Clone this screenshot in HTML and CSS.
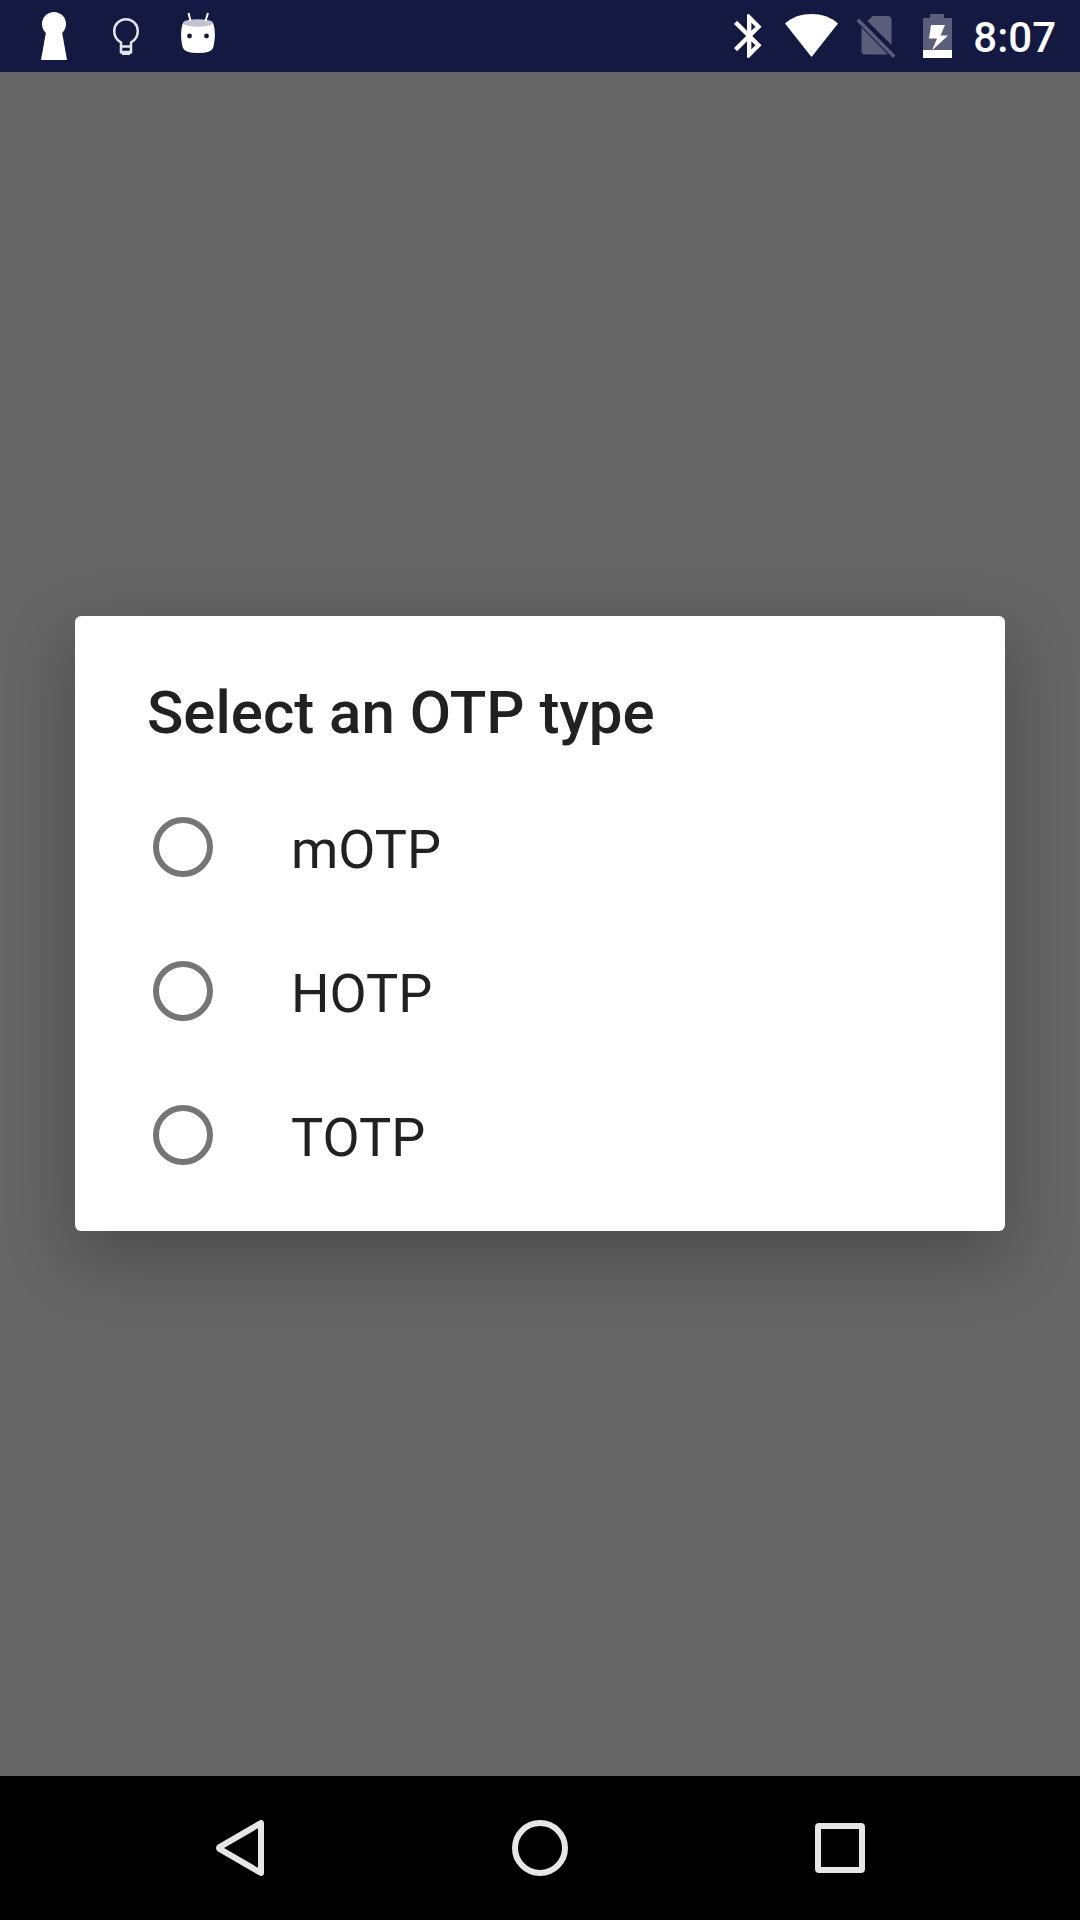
FILE: index.html
```html
<!DOCTYPE html>
<html lang="en">
<head>
<meta charset="utf-8">
<meta name="viewport" content="width=device-width, initial-scale=1">
<title>Select an OTP type</title>
<link rel="stylesheet" href="styles.css">
</head>
<body>
<div class="screen">
  <header class="status-bar">
    <div class="notifications">
      <svg class="notification" viewBox="0 0 72 72" aria-hidden="true">
        <circle cx="36" cy="24" r="12" fill="#fff"/>
        <path d="M28 32h16l5 28H23z" fill="#fff"/>
      </svg>
      <svg class="notification" viewBox="0 0 72 72" aria-hidden="true">
        <path d="M31 52V42.500C26.500 40 24.200 36 24.200 31a11.800 11.800 0 0 1 23.600 0c0 5-2.300 9-6.800 11.500V52zM31 46.500h10" fill="none" stroke="#e4e5ea" stroke-width="2.500"/>
        <path d="M30 51h12v2.500h-2V55h-8v-1.500h-2z" fill="#e4e5ea"/>
      </svg>
      <svg class="notification" viewBox="0 0 72 72" aria-hidden="true">
        <path d="M21 23Q36 20 51 23C54 30 53 42 51 48Q49.500 53 36 53Q22.500 53 21 48C19 42 18 30 21 23z" fill="#fff"/>
        <ellipse cx="36" cy="23" rx="15" ry="3.800" fill="#c3c4cf"/>
        <path d="M26.500 13l2 8M46 13l-2.500 8" stroke="#fff" stroke-width="2"/>
        <circle cx="27.500" cy="36" r="2.400" fill="#141941"/>
        <circle cx="44.500" cy="36" r="2.400" fill="#141941"/>
      </svg>
    </div>
    <div class="system">
      <svg class="bluetooth" viewBox="-1 0 24 24" aria-hidden="true">
        <path fill="#fff" d="M17.710 7.710L12 2h-1v7.590L6.410 5 5 6.410 10.590 12 5 17.590 6.410 19 11 14.410V22h1l5.710-5.710-4.300-4.290 4.300-4.290zM13 5.830l1.880 1.880L13 9.590V5.830zm1.880 10.460L13 18.170v-3.760l1.880 1.880z"/>
      </svg>
      <svg class="wifi" viewBox="0 0 60 72" aria-hidden="true">
        <path fill="#fff" d="M30.500 57L4 23.500C11 17 21 14 30.500 14S50 17 57 23.500z"/>
      </svg>
      <svg class="sim" viewBox="0 0 56 72" aria-hidden="true">
        <g fill="#fff" fill-opacity=".3">
          <path d="M7.500 21L10 18.500 46.500 55.500 44 58z"/>
          <path d="M12.500 27.500L39 54.500H16a3.500 3.500 0 0 1-3.500-3.500z"/>
          <path d="M18.500 21L23.500 16H39a3.500 3.500 0 0 1 3.500 3.500V45z"/>
        </g>
      </svg>
      <svg class="battery" viewBox="0 0 48 72" aria-hidden="true">
        <path fill="#fff" fill-opacity=".3" d="M10 18h7v-4h14v4h8v32H10z"/>
        <path fill="#fff" d="M10 50h29v8H10z"/>
        <path fill="#fff" d="M18 25h14l-4.500 10.500H35L19 50.500 24 38.500h-8z"/>
      </svg>
      <time class="clock" datetime="08:07">8:07</time>
    </div>
  </header>

  <main class="stage">
    <form class="dialog" role="dialog" aria-labelledby="dialog-title">
      <h1 class="dialog-title" id="dialog-title">Select an OTP type</h1>
      <div class="options" role="radiogroup" aria-labelledby="dialog-title">
        <label class="option"><input class="radio" type="radio" name="otp" value="motp"><span class="option-text">mOTP</span></label>
        <label class="option"><input class="radio" type="radio" name="otp" value="hotp"><span class="option-text">HOTP</span></label>
        <label class="option"><input class="radio" type="radio" name="otp" value="totp"><span class="option-text">TOTP</span></label>
      </div>
    </form>
  </main>

  <nav class="nav-bar" aria-label="System">
    <button class="nav-button" type="button" aria-label="Back">
      <svg class="nav-icon" viewBox="0 0 72 72" aria-hidden="true"><path d="M57 11v50L15.500 36.800Q14.500 36 15.500 35.200z"/></svg>
    </button>
    <button class="nav-button" type="button" aria-label="Home">
      <svg class="nav-icon" viewBox="0 0 72 72" aria-hidden="true"><circle cx="36" cy="36" r="25"/></svg>
    </button>
    <button class="nav-button" type="button" aria-label="Overview">
      <svg class="nav-icon" viewBox="0 0 72 72" aria-hidden="true"><rect x="14" y="14" width="44" height="44" rx="1"/></svg>
    </button>
  </nav>
</div>
</body>
</html>
```
FILE: styles.css
```css
* {
  box-sizing: border-box;
}

body {
  margin: 0;
  background: #656565;
  color: #212121;
  font-family: Roboto, "Noto Sans", sans-serif;
}

svg {
  display: block;
  flex: none;
}

.screen {
  display: flex;
  flex-direction: column;
  min-height: 100vh;
}

.status-bar {
  display: flex;
  justify-content: space-between;
  height: 72px;
  padding: 0 24px 0 18px;
  background: #141941;
  color: #fff;
}

.notifications,
.system {
  display: flex;
  align-items: center;
}

.notification {
  width: 72px;
  height: 72px;
}

.system {
  gap: 8px;
}

.bluetooth {
  width: 52px;
  height: 52px;
}

.wifi {
  width: 60px;
  height: 72px;
}

.sim {
  width: 56px;
  height: 72px;
}

.battery {
  width: 48px;
  height: 72px;
}

.clock {
  padding: 4px 0 0 4px;
  font-size: 42px;
  font-weight: 500;
  line-height: 48px;
}

.stage {
  display: flex;
  flex: 1;
  align-items: center;
  padding: 48px 75px 49px;
}

.dialog {
  flex: 1;
  padding-bottom: 24px;
  border-radius: 6px;
  background: #fff;
  box-shadow: 0 24px 68px rgba(0, 0, 0, 0.27);
}

.dialog-title {
  margin: 0;
  padding: 57px 72px 22px;
  font-size: 60px;
  font-weight: 500;
  line-height: 80px;
}

.option {
  display: flex;
  align-items: center;
  gap: 78px;
  height: 144px;
  padding: 0 78px;
  font-size: 54px;
  line-height: 64px;
}

.option-text {
  padding-top: 5px;
}

.radio {
  flex: none;
  width: 60px;
  height: 60px;
  margin: 0;
  border: 6px solid #757575;
  border-radius: 50%;
  appearance: none;
}

.radio:checked {
  background: radial-gradient(#757575 50%, transparent 52%);
}

.nav-bar {
  display: grid;
  grid-template-columns: repeat(3, 1fr);
  height: 144px;
  padding: 0 90px;
  background: #000;
}

.nav-button {
  display: flex;
  align-items: center;
  justify-content: center;
  padding: 0;
  border: 0;
  background: none;
}

.nav-icon {
  width: 72px;
  height: 72px;
  fill: none;
  stroke: #e6e6e6;
  stroke-width: 6;
  stroke-linejoin: round;
}
```
